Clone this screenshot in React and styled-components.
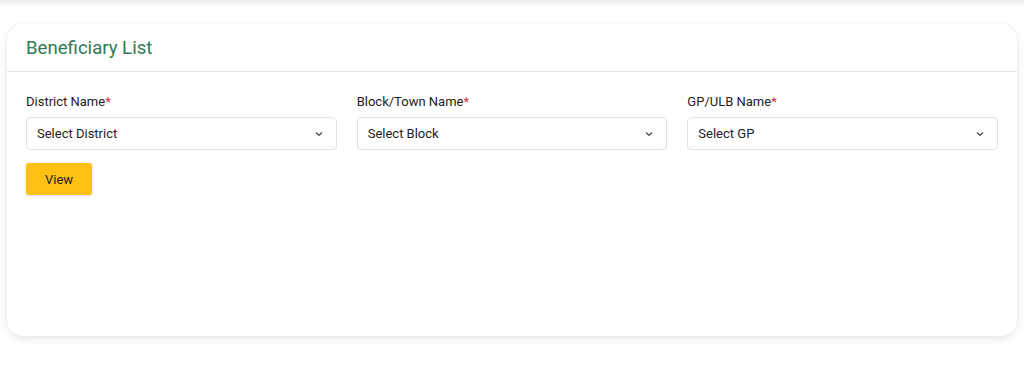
import React from "react";
import styled, { createGlobalStyle } from "styled-components";

const GlobalStyle = createGlobalStyle`
  body {
    margin: 0;
    background: #ffffff;
    font-family: Roboto, "Liberation Sans", Arial, sans-serif;
  }
`;

const Page = styled.div`
  width: 1024px;
  height: 387px;
  overflow: hidden;
`;

const TopShade = styled.div`
  height: 6px;
  background: linear-gradient(#ececec, #ffffff);
`;

const Card = styled.div`
  margin: 18px 7px 0;
  height: 312px;
  background: #fff;
  border-radius: 16px;
  box-shadow: 0 3px 10px rgba(0, 0, 0, 0.09), 0 0 3px rgba(0, 0, 0, 0.05);
  display: flex;
  flex-direction: column;
`;

const Header = styled.div`
  height: 47px;
  display: flex;
  align-items: center;
  padding: 0 19px;
  border-bottom: 1px solid #e4e4e4;
`;

const Title = styled.h2`
  margin: 0;
  font-size: 18.6px;
  font-weight: 400;
  color: #2f7b55;
`;

const Body = styled.div`
  padding: 21px 19px;
`;

const Grid = styled.div`
  display: grid;
  grid-template-columns: repeat(3, 1fr);
  column-gap: 20px;
`;

const Field = styled.div`
  display: flex;
  flex-direction: column;
`;

const Label = styled.label`
  font-size: 13px;
  color: #222;
  line-height: 17px;
  margin-bottom: 7px;
  span {
    color: #d0313d;
  }
`;

const SelectBox = styled.div`
  height: 33px;
  box-sizing: border-box;
  border: 1px solid #e2e2e2;
  border-radius: 4px;
  display: flex;
  align-items: center;
  justify-content: space-between;
  padding: 0 12px 0 10px;
  font-size: 13px;
  color: #222;
`;

const Button = styled.button`
  margin-top: 13px;
  width: 66px;
  height: 32px;
  border: none;
  border-radius: 3px;
  background: #fdc013;
  color: #222;
  font-family: inherit;
  font-size: 13px;
  box-shadow: 0 1px 3px rgba(0, 0, 0, 0.15);
`;

const Chevron = () => (
  <svg width="10" height="10" viewBox="0 0 10 10">
    <path d="M2.3 3.8 L5 6.4 L7.7 3.8" fill="none" stroke="#444" strokeWidth="1.2" strokeLinecap="round" strokeLinejoin="round" />
  </svg>
);

const fields = [
  { label: "District Name", placeholder: "Select District" },
  { label: "Block/Town Name", placeholder: "Select Block" },
  { label: "GP/ULB Name", placeholder: "Select GP" },
];

export default function App() {
  return (
    <Page>
      <GlobalStyle />
      <TopShade />
      <Card>
        <Header>
          <Title>Beneficiary List</Title>
        </Header>
        <Body>
          <Grid>
            {fields.map((f) => (
              <Field key={f.label}>
                <Label>
                  {f.label}
                  <span>*</span>
                </Label>
                <SelectBox>
                  {f.placeholder}
                  <Chevron />
                </SelectBox>
              </Field>
            ))}
          </Grid>
          <Button>View</Button>
        </Body>
      </Card>
    </Page>
  );
}
